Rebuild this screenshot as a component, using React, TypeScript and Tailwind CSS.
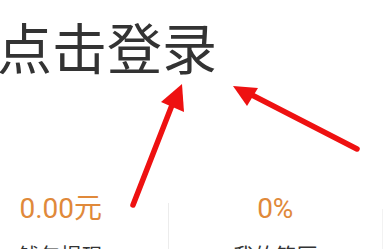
export default function App() {
  const cjk = { fontFamily: '"Noto Sans CJK SC", "Noto Sans", sans-serif' };
  return (
    <div className="relative w-[383px] h-[249px] overflow-hidden bg-white" style={cjk}>
      <div className="pt-[18px]">
        <div className="text-[55px] leading-none text-[#333333] ml-[-3px] whitespace-nowrap">点击登录</div>
      </div>
      <div className="flex ml-[-46px] mt-[122px]">
        <div className="w-[216px] flex flex-col items-center">
          <div className="text-[28px] leading-none text-[#e0893a]" style={{ fontFamily: 'Roboto, "Noto Sans CJK SC", sans-serif' }}>0.00元</div>
          <div className="mt-[21px] text-[21px] leading-none text-[#333333] whitespace-nowrap">钱包提现</div>
        </div>
        <div className="w-px mt-[8px] self-stretch bg-[#ececec]" />
        <div className="w-[216px] flex flex-col items-center">
          <div className="text-[28px] leading-none text-[#e0893a]" style={{ fontFamily: 'Roboto, "Noto Sans CJK SC", sans-serif' }}>0%</div>
          <div className="mt-[21px] text-[21px] leading-none text-[#333333] whitespace-nowrap">我的简历</div>
        </div>
        <div className="w-px mt-[14px] self-stretch bg-[#f2f2f2]" />
      </div>
      <svg className="absolute inset-0 pointer-events-none" width="383" height="249" viewBox="0 0 383 249">
        <line x1="133" y1="205" x2="174" y2="100" stroke="#ee1111" strokeWidth="5.5" strokeLinecap="round" />
        <polygon points="182,84 161,102 184,112" fill="#ee1111" />
        <line x1="357" y1="149" x2="250" y2="94" stroke="#ee1111" strokeWidth="5.5" strokeLinecap="round" />
        <polygon points="233,86 258,88 247,106" fill="#ee1111" />
      </svg>
    </div>
  );
}
